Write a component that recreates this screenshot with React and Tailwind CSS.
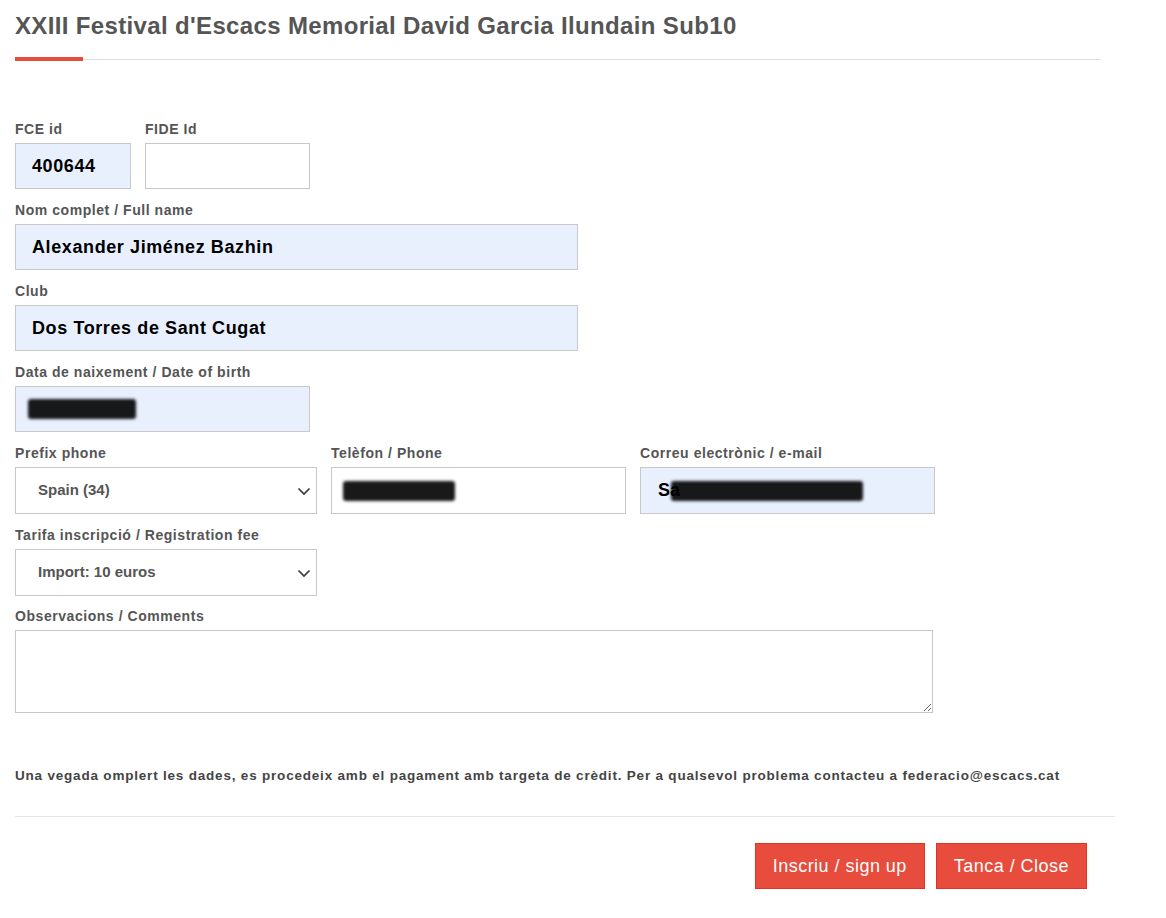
import React from "react";

const font = { fontFamily: '"Liberation Sans", Arial, sans-serif' };

function Label({ children }) {
  return (
    <div className="text-[14px] font-bold leading-[20px] text-[#555] mb-1 tracking-[0.55px]">
      {children}
    </div>
  );
}

function Filled({ width, children }) {
  return (
    <div
      className={`${width} h-[46px] border border-[#c8c8c8] bg-[#e8f0fe] flex items-center pl-[16px] text-[18px] font-bold text-black tracking-[0.6px]`}
    >
      {children}
    </div>
  );
}

// smudged-out personal data
function Smudge({ className }) {
  return <div className={`${className} h-[20px] bg-black/90 blur-[1.5px] rounded-[3px]`} />;
}

function Chevron() {
  return (
    <svg width="14" height="14" viewBox="0 0 14 14" fill="none">
      <path d="M1.5 4.5 L7 10 L12.5 4.5" stroke="#3a3a3a" strokeWidth="1.7" />
    </svg>
  );
}

function Select({ children }) {
  return (
    <div className="w-[302px] h-[47px] border border-[#c8c8c8] bg-white flex items-center justify-between pl-[22px] pr-[5px] text-[15px] font-bold text-[#555]">
      <span>{children}</span>
      <Chevron />
    </div>
  );
}

function Field({ label, children, className = "" }) {
  return (
    <div className={`flex flex-col ${className}`}>
      <Label>{label}</Label>
      {children}
    </div>
  );
}

export default function App() {
  return (
    <div className="bg-white w-[1166px] h-[918px] pl-[15px]" style={font}>
      <h1 className="pt-[11px] text-[24px] leading-[30px] font-bold text-[#555] tracking-[0.35px]">
        XXIII Festival d'Escacs Memorial David Garcia Ilundain Sub10
      </h1>
      <div className="mt-[16px] w-[1086px] flex items-center">
        <div className="w-[68px] h-[4px] bg-[#e74c3c]" />
        <div className="flex-1 h-px bg-[#ddd]" />
      </div>

      <div className="mt-[58px] flex flex-col gap-[11px]">
        <div className="flex gap-[14px]">
          <Field label="FCE id">
            <Filled width="w-[116px]">400644</Filled>
          </Field>
          <Field label="FIDE Id">
            <div className="w-[165px] h-[46px] border border-[#c8c8c8] bg-white" />
          </Field>
        </div>
        <Field label="Nom complet / Full name">
          <Filled width="w-[563px]">Alexander Jiménez Bazhin</Filled>
        </Field>
        <Field label="Club">
          <Filled width="w-[563px]">Dos Torres de Sant Cugat</Filled>
        </Field>
        <Field label="Data de naixement / Date of birth">
          <div className="w-[295px] h-[46px] border border-[#c8c8c8] bg-[#e8f0fe] flex items-center pl-[12px]">
            <Smudge className="w-[108px]" />
          </div>
        </Field>
        <div className="flex gap-[14px]">
          <Field label="Prefix phone">
            <Select>Spain (34)</Select>
          </Field>
          <Field label="Telèfon / Phone">
            <div className="w-[295px] h-[47px] border border-[#c8c8c8] bg-white flex items-center pl-[11px]">
              <Smudge className="w-[112px]" />
            </div>
          </Field>
          <Field label="Correu electrònic / e-mail">
            <div className="w-[295px] h-[47px] border border-[#c8c8c8] bg-[#e8f0fe] flex items-center pl-[17px] relative">
              <span className="text-[18px] font-bold text-black">Sa</span>
              <Smudge className="absolute left-[30px] w-[192px]" />
            </div>
          </Field>
        </div>
        <Field label="Tarifa inscripció / Registration fee">
          <Select>Import: 10 euros</Select>
        </Field>
        <Field label="Observacions / Comments" className="-mt-[1px]">
          <textarea className="w-[918px] h-[83px] border border-[#c8c8c8] bg-white block resize" />
        </Field>
      </div>

      <p className="mt-[54px] text-[13.5px] leading-[18px] font-bold text-[#444] tracking-[0.8px]">
        Una vegada omplert les dades, es procedeix amb el pagament amb targeta de crèdit. Per a qualsevol problema contacteu a federacio@escacs.cat
      </p>
      <div className="mt-[31px] w-[1100px] h-px bg-[#e5e5e5]" />
      <div className="mt-[26px] w-[1072px] flex justify-end gap-[11px]">
        <button className="h-[46px] px-[17px] bg-[#e74c3c] border border-[#dd3525] text-white text-[18px] tracking-[0.47px]">
          Inscriu / sign up
        </button>
        <button className="h-[46px] px-[17px] bg-[#e74c3c] border border-[#dd3525] text-white text-[18px] tracking-[0.47px]">
          Tanca / Close
        </button>
      </div>
    </div>
  );
}
